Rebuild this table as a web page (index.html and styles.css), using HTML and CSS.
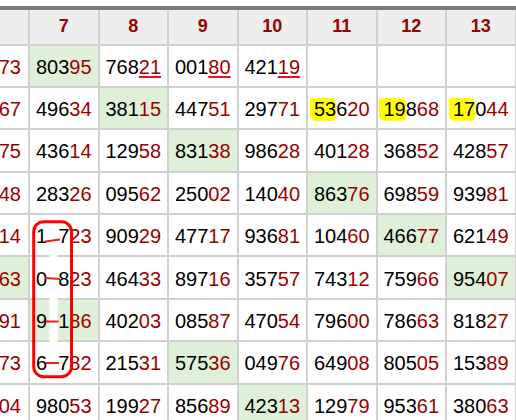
FILE: index.html
```html
<!DOCTYPE html>
<html>
<head>
<meta charset="utf-8">
<link rel="stylesheet" href="styles.css">
</head>
<body>
<div class="sheet">
  <div class="grid">
    <div class="hd edge"></div><div class="hd">7</div><div class="hd">8</div><div class="hd">9</div><div class="hd">10</div><div class="hd">11</div><div class="hd">12</div><div class="hd">13</div>

    <div class="c edge"><span class="r">73</span></div>
    <div class="c g">803<span class="r">95</span></div>
    <div class="c">768<span class="r u">21</span></div>
    <div class="c">001<span class="r u">80</span></div>
    <div class="c">421<span class="r u">19</span></div>
    <div class="c"></div><div class="c"></div><div class="c"></div>

    <div class="c edge"><span class="r">67</span></div>
    <div class="c">496<span class="r">34</span></div>
    <div class="c g">381<span class="r">15</span></div>
    <div class="c">447<span class="r">51</span></div>
    <div class="c">297<span class="r">71</span></div>
    <div class="c"><span class="hl">53</span>6<span class="r">20</span></div>
    <div class="c"><span class="hl">19</span>8<span class="r">68</span></div>
    <div class="c"><span class="hl">17</span>0<span class="r">44</span></div>

    <div class="c edge"><span class="r">75</span></div>
    <div class="c">436<span class="r">14</span></div>
    <div class="c">129<span class="r">58</span></div>
    <div class="c g">831<span class="r">38</span></div>
    <div class="c">986<span class="r">28</span></div>
    <div class="c">401<span class="r">28</span></div>
    <div class="c">368<span class="r">52</span></div>
    <div class="c">428<span class="r">57</span></div>

    <div class="c edge"><span class="r">48</span></div>
    <div class="c">283<span class="r">26</span></div>
    <div class="c">095<span class="r">62</span></div>
    <div class="c">250<span class="r">02</span></div>
    <div class="c">140<span class="r">40</span></div>
    <div class="c g">863<span class="r">76</span></div>
    <div class="c">698<span class="r">59</span></div>
    <div class="c">939<span class="r">81</span></div>

    <div class="c edge"><span class="r">14</span></div>
    <div class="c">1<span class="gap"></span>7<span class="r">23</span></div>
    <div class="c">909<span class="r">29</span></div>
    <div class="c">477<span class="r">17</span></div>
    <div class="c">936<span class="r">81</span></div>
    <div class="c">104<span class="r">60</span></div>
    <div class="c g">466<span class="r">77</span></div>
    <div class="c">621<span class="r">49</span></div>

    <div class="c edge g"><span class="r">63</span></div>
    <div class="c">0<span class="gap"></span>8<span class="r">23</span></div>
    <div class="c">464<span class="r">33</span></div>
    <div class="c">897<span class="r">16</span></div>
    <div class="c">357<span class="r">57</span></div>
    <div class="c">743<span class="r">12</span></div>
    <div class="c">759<span class="r">66</span></div>
    <div class="c g">954<span class="r">07</span></div>

    <div class="c edge"><span class="r">91</span></div>
    <div class="c g">9<span class="gap"></span>1<span class="r">86</span></div>
    <div class="c">402<span class="r">03</span></div>
    <div class="c">085<span class="r">87</span></div>
    <div class="c">470<span class="r">54</span></div>
    <div class="c">796<span class="r">00</span></div>
    <div class="c">786<span class="r">63</span></div>
    <div class="c">818<span class="r">27</span></div>

    <div class="c edge"><span class="r">73</span></div>
    <div class="c">6<span class="gap"></span>7<span class="r">82</span></div>
    <div class="c">215<span class="r">31</span></div>
    <div class="c g">575<span class="r">36</span></div>
    <div class="c">049<span class="r">76</span></div>
    <div class="c">649<span class="r">08</span></div>
    <div class="c">805<span class="r">05</span></div>
    <div class="c">153<span class="r">89</span></div>

    <div class="c edge"><span class="r">04</span></div>
    <div class="c">980<span class="r">53</span></div>
    <div class="c">199<span class="r">27</span></div>
    <div class="c">856<span class="r">89</span></div>
    <div class="c g">423<span class="r">13</span></div>
    <div class="c">129<span class="r">79</span></div>
    <div class="c">953<span class="r">61</span></div>
    <div class="c">380<span class="r">63</span></div>
  </div>

  <svg class="mark" width="516" height="420" viewBox="0 0 516 420">
    <rect x="49.5" y="223" width="8" height="152" fill="#ffffff"/>
    <rect x="33.7" y="221.7" width="37.8" height="155" rx="10" ry="10" fill="none" stroke="#ff0000" stroke-width="3"/>
    <line x1="45" y1="241.5" x2="60" y2="239.5" stroke="#ee1c1c" stroke-width="2"/>
    <line x1="45" y1="278" x2="60" y2="279" stroke="#ee1c1c" stroke-width="2"/>
    <line x1="45.5" y1="321.5" x2="58.5" y2="321.5" stroke="#ee1c1c" stroke-width="2"/>
    <line x1="45.5" y1="363" x2="59" y2="363" stroke="#ee1c1c" stroke-width="2"/>
  </svg>
</div>
</body>
</html>
```

FILE: styles.css
```css
html, body {
  margin: 0;
  padding: 0;
  overflow: hidden;
  background: #ffffff;
}

.sheet {
  position: relative;
  width: 516px;
  height: 420px;
  padding-top: 6px;
  box-sizing: border-box;
  overflow: hidden;
}

.grid {
  display: grid;
  grid-template-columns: 28px repeat(7, 67.5px);
  grid-template-rows: 33.5px repeat(9, 40.4px);
  gap: 2px;
  width: max-content;
  padding-right: 2px;
  background: #d0d0d0;
  border-top: 4.3px solid #7a7a7a;
  font-family: "Liberation Sans", Arial, sans-serif;
}

.c,
.hd {
  display: flex;
  align-items: center;
  justify-content: center;
  background: #ffffff;
  color: #000000;
  font-size: 20px;
  white-space: nowrap;
}

.c {
  padding-top: 3px;
  box-sizing: border-box;
}

.hd {
  background: #eeeeee;
  color: #990000;
  font-weight: bold;
  font-size: 18px;
}

.edge {
  justify-content: flex-end;
  padding-right: 7px;
}

.g {
  background: #dff0d8;
}

.r {
  color: #9a0000;
}

.u {
  text-decoration: underline;
  text-decoration-color: #e8141c;
  text-decoration-thickness: 2px;
  text-underline-offset: 2px;
}

.hl {
  background: #ffff00;
  padding-left: 4px;
  margin-left: -4px;
  border-radius: 2px 5px 4px 6px;
}

.gap {
  display: inline-block;
  width: 0.556em;
}

.mark {
  position: absolute;
  left: 0;
  top: 0;
  pointer-events: none;
}
```
